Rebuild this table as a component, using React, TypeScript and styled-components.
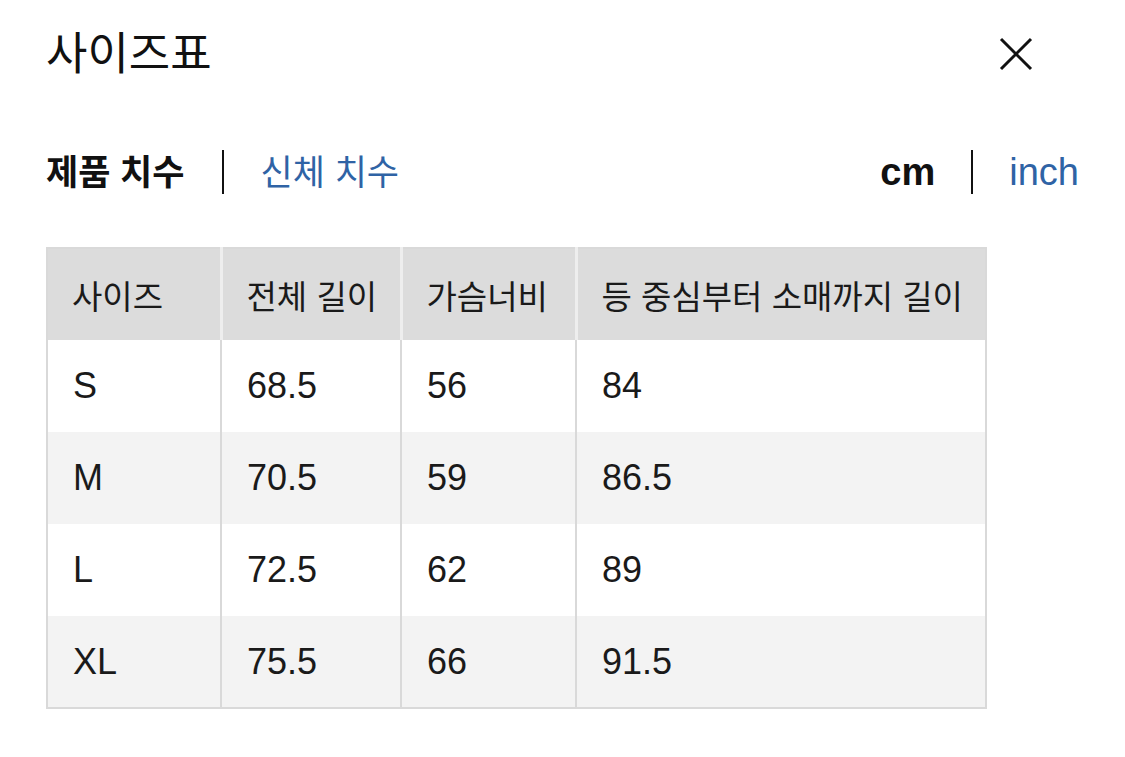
import React from "react";
import styled, { createGlobalStyle } from "styled-components";

const Global = createGlobalStyle`
  html, body { margin: 0; padding: 0; background: #fff; }
  body { font-family: "Liberation Sans", "Noto Sans CJK KR", sans-serif; color: #111; }
`;

const Page = styled.div`
  width: 1125px;
  height: 757px;
  box-sizing: border-box;
  padding: 24px 46px 0 46px;
  background: #fff;
`;

const Header = styled.div`
  display: flex;
  align-items: center;
  justify-content: space-between;
  height: 60px;
`;

const Title = styled.h1`
  margin: 0;
  font-size: 45px;
  font-weight: 400;
  line-height: 1;
`;

const CloseButton = styled.button`
  border: 0;
  background: none;
  padding: 0;
  width: 34px;
  height: 34px;
  margin-right: 46px;
  display: flex;
  align-items: center;
  justify-content: center;
  cursor: pointer;
`;

const TabsRow = styled.div`
  display: flex;
  align-items: center;
  justify-content: space-between;
  margin-top: 57px;
  height: 62px;
`;

const TabGroup = styled.div`
  display: flex;
  align-items: center;
`;

const Tab = styled.span<{ $active?: boolean; $latin?: boolean }>`
  font-size: ${(p) => (p.$latin ? 38 : 35)}px;
  font-weight: ${(p) => (p.$active ? 700 : 400)};
  color: ${(p) => (p.$active ? "#111" : "#2f63a5")};
  line-height: 1;
`;

const Divider = styled.span<{ $gap: number }>`
  display: inline-block;
  width: 2px;
  height: 44px;
  background: #111;
  margin: 0 ${(p) => p.$gap}px;
`;

const Table = styled.table`
  margin-top: 44px;
  border-collapse: collapse;
  table-layout: fixed;
  width: 941px;
  border: 2px solid #d9d9d9;
`;

const Th = styled.th<{ $w: number }>`
  width: ${(p) => p.$w}px;
  height: 92px;
  background: #dcdcdc;
  border-left: 3px solid #eeeeee;
  text-align: left;
  padding: 0 0 0 24px;
  font-size: 33px;
  font-weight: 400;
  color: #1a1a1a;
  box-sizing: border-box;
  white-space: nowrap;
  &:first-child { border-left: 0; }
`;

const Tr = styled.tr<{ $alt: boolean }>`
  background: ${(p) => (p.$alt ? "#f3f3f3" : "#ffffff")};
`;

const Td = styled.td`
  height: 92px;
  padding: 0 0 0 25px;
  border-left: 2px solid #d9d9d9;
  font-size: 36px;
  color: #1a1a1a;
  box-sizing: border-box;
  &:first-child { border-left: 0; }
`;

const columns = [
  { label: "사이즈", w: 174 },
  { label: "전체 길이", w: 180 },
  { label: "가슴너비", w: 175 },
  { label: "등 중심부터 소매까지 길이", w: 410 },
];

const rows = [
  ["S", "68.5", "56", "84"],
  ["M", "70.5", "59", "86.5"],
  ["L", "72.5", "62", "89"],
  ["XL", "75.5", "66", "91.5"],
];

export default function App() {
  return (
    <>
      <Global />
      <Page>
        <Header>
          <Title>사이즈표</Title>
          <CloseButton aria-label="닫기">
            <svg width="34" height="34" viewBox="0 0 34 34">
              <path d="M2 2 L32 32 M32 2 L2 32" stroke="#111" strokeWidth="3" fill="none" />
            </svg>
          </CloseButton>
        </Header>
        <TabsRow>
          <TabGroup>
            <Tab $active>제품 치수</Tab>
            <Divider $gap={37} />
            <Tab>신체 치수</Tab>
          </TabGroup>
          <TabGroup>
            <Tab $active $latin>cm</Tab>
            <Divider $gap={36} />
            <Tab $latin>inch</Tab>
          </TabGroup>
        </TabsRow>
        <Table>
          <thead>
            <tr>
              {columns.map((c) => (
                <Th key={c.label} $w={c.w}>{c.label}</Th>
              ))}
            </tr>
          </thead>
          <tbody>
            {rows.map((r, i) => (
              <Tr key={r[0]} $alt={i % 2 === 1}>
                {r.map((v, j) => (
                  <Td key={j}>{v}</Td>
                ))}
              </Tr>
            ))}
          </tbody>
        </Table>
      </Page>
    </>
  );
}
